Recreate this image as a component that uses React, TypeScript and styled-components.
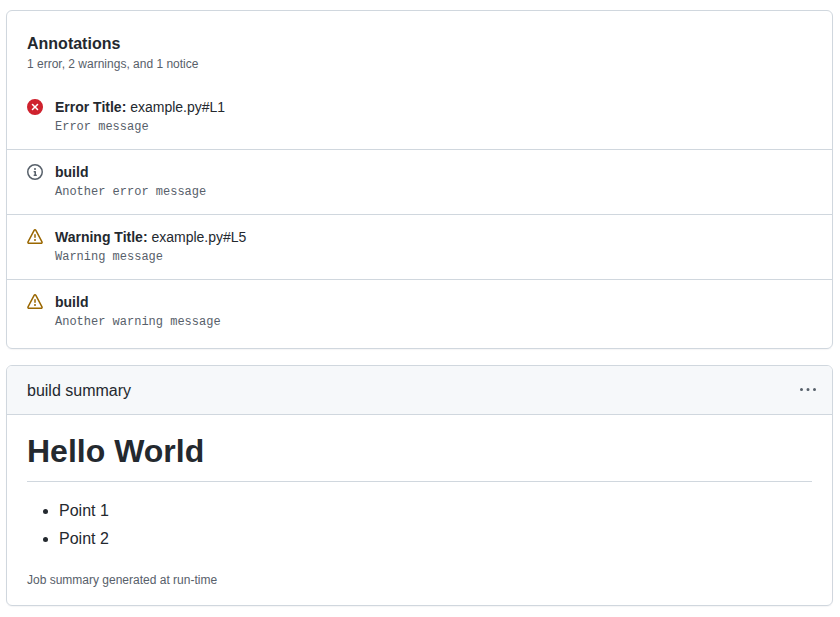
import React from 'react';
import styled, { createGlobalStyle } from 'styled-components';

const GlobalStyle = createGlobalStyle`
  body {
    margin: 0;
    background: #ffffff;
    color: #24292f;
    font-family: "Liberation Sans", Arial, sans-serif;
    font-size: 14px;
  }
`

const Page = styled.div`
  display: flex;
  flex-direction: column;
  gap: 16px;
  padding: 10px 7px 10px 6px;
`

const Card = styled.section`
  border: 1px solid #d0d7de;
  border-radius: 6px;
  box-shadow: 0 1px 1px rgba(31, 35, 40, 0.04);
`

const AnnotationList = styled.div`
  padding-bottom: 4px;
`

const CardHeading = styled.div`
  padding: 21px 20px 13px;
`

const Title = styled.h2`
  margin: 0;
  font-size: 16px;
  line-height: 24px;
  font-weight: 700;
`

const Subtitle = styled.div`
  font-size: 12px;
  line-height: 16px;
  color: #57606a;
`

const Row = styled.div`
  display: flex;
  gap: 12px;
  height: 64px;
  padding: 0 20px;
  align-items: flex-start;

  & + & {
    border-top: 1px solid #d0d7de;
  }
`

const IconSlot = styled.div<{ $color: string }>`
  flex: none;
  width: 16px;
  height: 16px;
  margin-top: 14px;
  color: ${(p) => p.$color};

  svg {
    display: block;
    fill: currentColor;
  }
`

const RowBody = styled.div`
  padding-top: 12px;
`

const RowTitle = styled.div`
  font-size: 14px;
  line-height: 21px;
`

const Message = styled.div`
  font-family: "Liberation Mono", "Courier New", monospace;
  font-size: 12px;
  line-height: 18px;
  color: #57606a;
`

const SummaryHeader = styled.div`
  display: flex;
  align-items: center;
  justify-content: space-between;
  height: 49px;
  padding: 1px 16px 0 20px;
  box-sizing: border-box;
  background: #f6f8fa;
  border-bottom: 1px solid #d0d7de;
  border-radius: 5px 5px 0 0;
  font-size: 16px;
`

const MenuIcon = styled.svg`
  display: block;
  margin-bottom: 1px;
  fill: #57606a;
`

const SummaryBody = styled.div`
  padding: 16px 20px;
`

const Heading = styled.h1`
  margin: 0 0 17px;
  padding-bottom: 10px;
  border-bottom: 1px solid #d0d7de;
  font-size: 32px;
  line-height: 40px;
  font-weight: 700;
`

const Points = styled.ul`
  margin: 0 0 20px;
  padding-left: 32px;
  font-size: 16px;
  line-height: 24px;

  li + li {
    margin-top: 4px;
  }
`

const Footnote = styled.div`
  font-size: 12px;
  line-height: 18px;
  color: #57606a;
`

const XCircleFill = () => (
  <svg width="16" height="16" viewBox="0 0 16 16">
    <path d="M2.343 13.657A8 8 0 1 1 13.658 2.343 8 8 0 0 1 2.343 13.657ZM6.03 4.97a.751.751 0 0 0-1.042.018.751.751 0 0 0-.018 1.042L6.94 8 4.97 9.97a.749.749 0 0 0 .326 1.275.749.749 0 0 0 .734-.215L8 9.06l1.97 1.97a.749.749 0 0 0 1.275-.326.749.749 0 0 0-.215-.734L9.06 8l1.97-1.97a.749.749 0 0 0-.326-1.275.749.749 0 0 0-.734.215L8 6.94Z" />
  </svg>
)

const InfoIcon = () => (
  <svg width="16" height="16" viewBox="0 0 16 16">
    <path d="M0 8a8 8 0 1 1 16 0A8 8 0 0 1 0 8Zm8-6.5a6.5 6.5 0 1 0 0 13 6.5 6.5 0 0 0 0-13ZM6.5 7.75A.75.75 0 0 1 7.25 7h1a.75.75 0 0 1 .75.75v2.75h.25a.75.75 0 0 1 0 1.5h-2a.75.75 0 0 1 0-1.5h.25v-2h-.25a.75.75 0 0 1-.75-.75ZM8 6a1 1 0 1 1 0-2 1 1 0 0 1 0 2Z" />
  </svg>
)

const AlertIcon = () => (
  <svg width="16" height="16" viewBox="0 0 16 16">
    <path d="M6.457 1.047c.659-1.234 2.427-1.234 3.086 0l6.082 11.378A1.75 1.75 0 0 1 14.082 15H1.918a1.75 1.75 0 0 1-1.543-2.575Zm1.763.707a.25.25 0 0 0-.44 0L1.698 13.132a.25.25 0 0 0 .22.368h12.164a.25.25 0 0 0 .22-.368Zm.53 3.996v2.5a.75.75 0 0 1-1.5 0v-2.5a.75.75 0 0 1 1.5 0ZM9 11a1 1 0 1 1-2 0 1 1 0 0 1 2 0Z" />
  </svg>
)

const annotations = [
  { icon: <XCircleFill />, color: '#cf222e', title: 'Error Title:', location: 'example.py#L1', message: 'Error message' },
  { icon: <InfoIcon />, color: '#57606a', title: 'build', location: '', message: 'Another error message' },
  { icon: <AlertIcon />, color: '#9a6700', title: 'Warning Title:', location: 'example.py#L5', message: 'Warning message' },
  { icon: <AlertIcon />, color: '#9a6700', title: 'build', location: '', message: 'Another warning message' },
]

export default function App() {
  return (
    <>
      <GlobalStyle />
      <Page>
        <Card>
          <CardHeading>
            <Title>Annotations</Title>
            <Subtitle>1 error, 2 warnings, and 1 notice</Subtitle>
          </CardHeading>
          <AnnotationList>
            {annotations.map((a, i) => (
              <Row key={i}>
                <IconSlot $color={a.color}>{a.icon}</IconSlot>
                <RowBody>
                  <RowTitle>
                    <strong>{a.title}</strong>
                    {a.location && ` ${a.location}`}
                  </RowTitle>
                  <Message>{a.message}</Message>
                </RowBody>
              </Row>
            ))}
          </AnnotationList>
        </Card>
        <Card>
          <SummaryHeader>
            build summary
            <MenuIcon width="16" height="16" viewBox="0 0 16 16">
              <path d="M8 9a1.5 1.5 0 1 0 0-3 1.5 1.5 0 0 0 0 3ZM1.5 9a1.5 1.5 0 1 0 0-3 1.5 1.5 0 0 0 0 3Zm13 0a1.5 1.5 0 1 0 0-3 1.5 1.5 0 0 0 0 3Z" />
            </MenuIcon>
          </SummaryHeader>
          <SummaryBody>
            <Heading>Hello World</Heading>
            <Points>
              <li>Point 1</li>
              <li>Point 2</li>
            </Points>
            <Footnote>Job summary generated at run-time</Footnote>
          </SummaryBody>
        </Card>
      </Page>
    </>
  );
}
